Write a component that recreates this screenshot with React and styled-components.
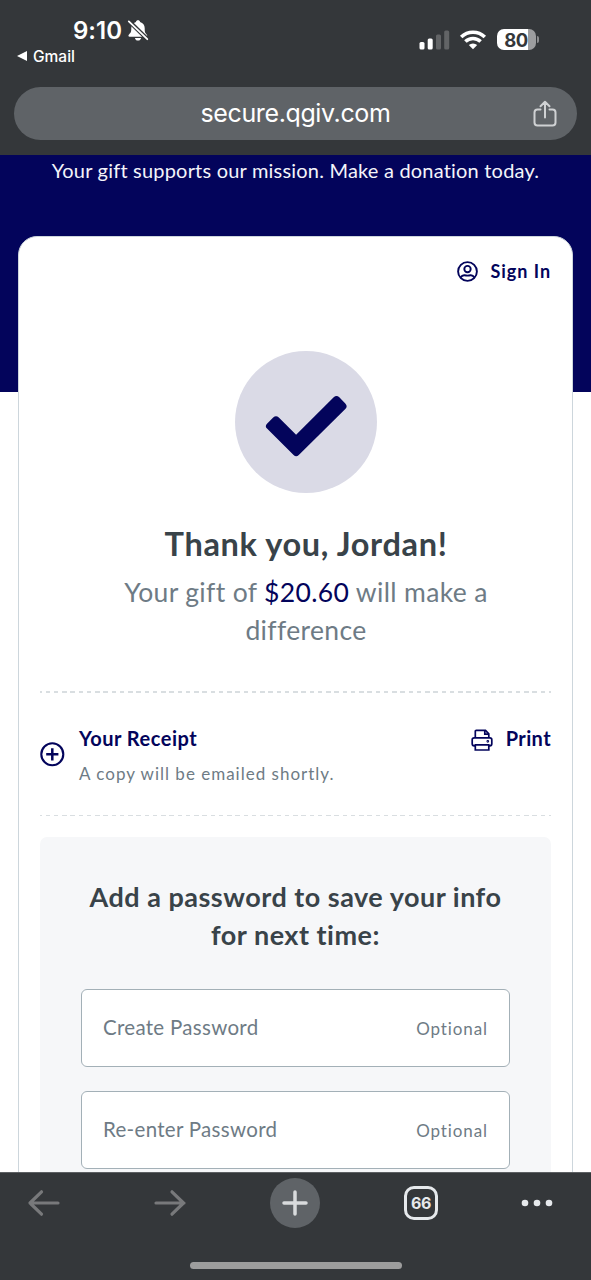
import React from "react";
import styled, { createGlobalStyle } from "styled-components";

const navy = "#03045b";
const chrome = "#34373a";
const ink = "#394349";
const slate = "#6e7b85";

const GlobalStyle = createGlobalStyle`
  *, *::before, *::after { box-sizing: border-box; }
  html, body { margin: 0; padding: 0; background: ${chrome}; }
  body { overflow: hidden; }
  h1, h2, h3, p { margin: 0; }
  button { border: 0; padding: 0; background: none; font: inherit; color: inherit; }
  svg { display: block; flex: none; overflow: visible; }
`;

const Screen = styled.div`
  width: 591px;
  height: 1280px;
  display: flex;
  flex-direction: column;
  overflow: hidden;
  font-family: Lato, "Open Sans", sans-serif;
  font-variant-ligatures: none;
`;

/* Browser top chrome */
const TopChrome = styled.header`
  flex: none;
  height: 155px;
  background: ${chrome};
  color: #fff;
  font-family: Inter, "Liberation Sans", sans-serif;
`;
const StatusBar = styled.div`
  display: flex;
  justify-content: space-between;
  height: 87px;
  padding: 16px 52px 0 17px;
`;
const Clock = styled.div`
  display: flex;
  align-items: center;
  gap: 6px;
  height: 28px;
  padding-left: 56px;
  font-size: 24px;
  font-weight: 600;
  letter-spacing: 0;
`;
const BackToApp = styled.div`
  display: flex;
  align-items: center;
  gap: 6px;
  height: 20px;
  margin-top: 2px;
  font-size: 15.5px;
  font-weight: 500;
  letter-spacing: 0;
`;
const StatusIcons = styled.div`
  display: flex;
  align-items: center;
  height: 22px;
  margin-top: 12.5px;
`;
const WifiIcon = styled.svg`
  margin-left: 10px;
`;
const Battery = styled.div`
  display: flex;
  align-items: center;
  justify-content: center;
  width: 39px;
  height: 21px;
  margin-left: 11px;
  padding-right: 1px;
  border-radius: 7px;
  background: linear-gradient(90deg, #fff 80%, #9c9d9f 80%);
  color: ${chrome};
  font-size: 18.5px;
  font-weight: 700;
  letter-spacing: -0.5px;
`;
const BatteryTip = styled.div`
  width: 2px;
  height: 7px;
  margin-left: 1px;
  border-radius: 0 3px 3px 0;
  background: #8c8d8f;
`;
const AddressBar = styled.div`
  display: grid;
  grid-template-columns: 24px 1fr 24px;
  align-items: center;
  height: 53px;
  margin: 0 14px;
  padding: 0 20px;
  border-radius: 27px;
  background: #5f6367;
`;
const Address = styled.span`
  grid-column: 2;
  padding-bottom: 2px;
  text-align: center;
  font-size: 25px;
  line-height: 50px;
  letter-spacing: -0.38px;
`;

/* Donation page */
const Page = styled.main`
  flex: 1;
  min-height: 0;
  overflow: hidden;
  background: #fff;
`;
const Hero = styled.div`
  height: 237px;
  background: ${navy};
  color: #f4f4fa;
  text-align: center;
  font-size: 20px;
  line-height: 30px;
  letter-spacing: 0.2px;
  white-space: nowrap;
`;
const Card = styled.section`
  height: 1000px;
  margin: -156px 18px 0;
  padding: 0 21px;
  border: 1px solid #cdd6dc;
  border-radius: 19px;
  background: #fff;
`;
const SignIn = styled.button`
  display: flex;
  align-items: center;
  gap: 13px;
  height: 24px;
  margin: 22px 0 0 auto;
  color: ${navy};
  font-size: 18px;
  font-weight: 700;
  letter-spacing: 0.95px;
`;
const Thanks = styled.div`
  display: flex;
  flex-direction: column;
  align-items: center;
  height: 408px;
  padding: 68px 0 0 21px;
  text-align: center;
  white-space: nowrap;
`;
const Seal = styled.div`
  display: flex;
  align-items: center;
  justify-content: center;
  width: 142px;
  height: 142px;
  padding-top: 8px;
  border-radius: 50%;
  background: #dadae6;
`;
const Title = styled.h1`
  margin-top: 31px;
  color: ${ink};
  font-size: 32.5px;
  line-height: 40px;
  font-weight: 700;
  letter-spacing: 0.65px;
`;
const Summary = styled.p`
  margin-top: 9px;
  color: ${slate};
  font-size: 26.5px;
  line-height: 38px;
  letter-spacing: 0.35px;
`;
const Amount = styled.span`
  color: ${navy};
`;
const DashedRule = styled.div`
  height: ${(p) => p.$weight}px;
  background: repeating-linear-gradient(
    90deg, #d9dee1 0 4.5px, transparent 4.5px 8.25px
  ) -2.5px 0 / 600px 100%;
`;
const Receipt = styled.div`
  display: flex;
  height: 122px;
`;
const ReceiptIcon = styled.div`
  width: 39px;
  padding-top: 49px;
`;
const ReceiptText = styled.div`
  flex: 1;
  padding-top: 31px;
  white-space: nowrap;
`;
const ReceiptTitle = styled.h2`
  color: ${navy};
  font-size: 20px;
  line-height: 28px;
  font-weight: 700;
  letter-spacing: 0.5px;
`;
const ReceiptNote = styled.p`
  margin-top: 10px;
  color: ${slate};
  font-size: 17px;
  line-height: 24px;
  letter-spacing: 1px;
`;
const PrintButton = styled.button`
  display: flex;
  align-items: center;
  align-self: flex-start;
  gap: 13px;
  height: 28px;
  margin-top: 31px;
  color: ${navy};
  font-size: 20px;
  font-weight: 700;
  letter-spacing: 0.4px;
`;
const PrinterIcon = styled.svg`
  margin-top: 3px;
`;
const PasswordPanel = styled.div`
  height: 400px;
  margin-top: 21px;
  padding: 41px 41px 0;
  border-radius: 7px;
  background: #f6f7f9;
`;
const PanelTitle = styled.h3`
  color: ${ink};
  font-size: 27px;
  line-height: 38px;
  font-weight: 700;
  letter-spacing: 0.5px;
  text-align: center;
  white-space: nowrap;
`;
const Fields = styled.div`
  display: grid;
  gap: 24px;
  margin-top: 35px;
`;
const Field = styled.label`
  display: flex;
  align-items: center;
  justify-content: space-between;
  height: 78px;
  padding: 0 21px 2px;
  border: 1px solid #a3b0b7;
  border-radius: 6px;
  background: #fff;
  color: ${slate};
  font-size: 20.5px;
  letter-spacing: 0.3px;
`;
const Hint = styled.span`
  padding-top: 3px;
  font-size: 17px;
  letter-spacing: 0.9px;
`;

/* Browser bottom chrome */
const BottomChrome = styled.footer`
  flex: none;
  display: flex;
  flex-direction: column;
  align-items: center;
  justify-content: space-between;
  height: 108px;
  padding: 5px 0 11px;
  border-top: 1px solid #5d6063;
  background: ${chrome};
  font-family: Inter, "Liberation Sans", sans-serif;
`;
const Toolbar = styled.nav`
  display: flex;
  align-items: center;
  gap: 84px;
  width: 100%;
  height: 50px;
  padding-left: 28px;
`;
const ForwardButton = styled.button`
  margin-left: 10px;
`;
const NewTab = styled.button`
  display: flex;
  align-items: center;
  justify-content: center;
  width: 50px;
  height: 50px;
  border-radius: 50%;
  background: #5f6367;
`;
const TabCount = styled.button`
  display: flex;
  align-items: center;
  justify-content: center;
  width: 34px;
  height: 34px;
  border: 3px solid #e6e9ec;
  border-radius: 10px;
  color: #e6e9ec;
  font-size: 16px;
  font-weight: 700;
  letter-spacing: -0.5px;
`;
const MoreIcon = styled.svg`
  margin-left: -1px;
`;
const HomeIndicator = styled.div`
  width: 212px;
  height: 7px;
  border-radius: 4px;
  background: #9d9d9d;
`;

const MutedBell = () => (
  <svg width="20" height="21" viewBox="0 0 20 21">
    <path d="M10 .2C8.900 .2 8.100 .9 7.900 1.900 5 2.800 3.300 5 3.300 8c0 4.200-.6 4.800-2.300 6.400-1 1-.7 2.300.7 2.300h16.200c1.400 0 1.700-1.300.7-2.300C17 12.800 16.700 12.200 16.700 8c0-3-1.700-5.200-4.600-6.100C11.900 .9 11.100 .2 10 .2ZM6.900 18h6.200c-.4 1.600-1.500 2.600-3.100 2.600S7.300 19.600 6.900 18Z" fill="#fff" />
    <path d="M.3 .6 20 19.700" stroke={chrome} strokeWidth="4.200" />
    <path d="M.8 1.400 19.300 19.200" stroke="#fff" strokeWidth="1.800" strokeLinecap="round" />
  </svg>
);

const Signal = () => (
  <svg width="31" height="20" viewBox="0 0 31 20">
    <rect x=".5" y="12" width="5" height="7.500" rx="1.500" fill="#fff" />
    <rect x="8.700" y="8.500" width="5" height="11" rx="1.500" fill="#fff" />
    <rect x="17" y="4.500" width="5" height="15" rx="1.500" fill="#626466" />
    <rect x="25.200" y=".5" width="5" height="19" rx="1.500" fill="#626466" />
  </svg>
);

const Wifi = () => (
  <WifiIcon width="26" height="20" viewBox="0 0 26 20">
    <g fill="none" stroke="#fff" strokeWidth="3.500">
      <path d="M1.200 7.100a16.800 16.800 0 0 1 23.600 0" />
      <path d="M5.400 11.600a10.700 10.700 0 0 1 15.200 0" />
    </g>
    <path d="M13 19.200 8.800 15.100a6 6 0 0 1 8.400 0Z" fill="#fff" />
  </WifiIcon>
);

const Share = () => (
  <svg width="24" height="28" viewBox="0 0 24 28" fill="none" stroke="#cfd1d3" strokeWidth="2" strokeLinecap="round" strokeLinejoin="round">
    <path d="M7.500 9.500H4.500A3 3 0 0 0 1.500 12.500V22.500a3 3 0 0 0 3 3h15a3 3 0 0 0 3-3v-10a3 3 0 0 0-3-3h-3M12 17.500V2M7.500 6.200 12 1.700l4.500 4.500" />
  </svg>
);

const User = () => (
  <svg width="21" height="21" viewBox="0 0 21 21" fill="none" stroke={navy} strokeWidth="1.900">
    <circle cx="10.500" cy="10.500" r="9.400" />
    <circle cx="10.500" cy="8.100" r="3.200" />
    <path d="M3.600 16.600c1.100-1.800 2.500-2.500 4-2.300 1.900.4 3.900.4 5.800 0 1.500-.2 2.900.5 4 2.300" />
  </svg>
);

const Check = () => (
  <svg width="82" height="62" viewBox="0 0 82 62">
    <path d="M2 28.700 8.200 22.500a4 4 0 0 1 5.600 0L31.100 39.800 68.700 2.300a4 4 0 0 1 5.600 0l6 6.100a4 4 0 0 1 0 5.600L33.800 60a3.600 3.600 0 0 1-5.200 0L2 33.600a3.500 3.500 0 0 1 0-4.900Z" fill={navy} />
  </svg>
);

const PlusCircle = () => (
  <svg width="25" height="25" viewBox="0 0 25 25" fill="none" stroke={navy} strokeWidth="2.100">
    <circle cx="12.300" cy="12.300" r="11" />
    <path d="M12.300 6.200v12.200M6.200 12.300h12.200" strokeWidth="2.500" />
  </svg>
);

const Printer = () => (
  <PrinterIcon width="22" height="22" viewBox="0 0 22 22" fill="none" stroke={navy} strokeWidth="1.700">
    <path d="M4.300 8.800V2.300a1 1 0 0 1 1-1h9.200l3.300 3.500v4M4.300 16.800H3.200a2 2 0 0 1-2-2v-4a2 2 0 0 1 2-2h15.600a2 2 0 0 1 2 2v4a2 2 0 0 1-2 2h-1.100M4.300 15.800h13.500v5.200H4.300z" />
    <path d="M13.800 1.300v3.800h4" />
    <circle cx="16.800" cy="12.300" r=".5" />
  </PrinterIcon>
);

const Arrow = ({ flip }) => (
  <svg width="32" height="26" viewBox="0 0 32 26" fill="none" stroke="#78797b" strokeWidth="3.200" strokeLinecap="round" strokeLinejoin="round">
    <path d={flip ? "M2 13h28M18 1.800 29.500 13 18 24.200" : "M30 13H2M13.500 1.800 2 13l11.500 11.200"} />
  </svg>
);

export default function App() {
  return (
    <Screen>
      <GlobalStyle />
      <TopChrome>
        <StatusBar>
          <div>
            <Clock>9:10 <MutedBell /></Clock>
            <BackToApp>
              <svg width="10" height="10" viewBox="0 0 10 10"><path d="M0 5 10 0v10Z" fill="#fff" /></svg>
              Gmail
            </BackToApp>
          </div>
          <StatusIcons>
            <Signal />
            <Wifi />
            <Battery>80</Battery>
            <BatteryTip />
          </StatusIcons>
        </StatusBar>
        <AddressBar>
          <Address>secure.qgiv.com</Address>
          <Share />
        </AddressBar>
      </TopChrome>

      <Page>
        <Hero>Your gift supports our mission. Make a donation today.</Hero>
        <Card>
          <SignIn><User />Sign In</SignIn>
          <Thanks>
            <Seal><Check /></Seal>
            <Title>Thank you, Jordan!</Title>
            <Summary>
              Your gift of <Amount>$20.60</Amount> will make a<br />difference
            </Summary>
          </Thanks>
          <DashedRule $weight={2} />
          <Receipt>
            <ReceiptIcon><PlusCircle /></ReceiptIcon>
            <ReceiptText>
              <ReceiptTitle>Your Receipt</ReceiptTitle>
              <ReceiptNote>A copy will be emailed shortly.</ReceiptNote>
            </ReceiptText>
            <PrintButton><Printer />Print</PrintButton>
          </Receipt>
          <DashedRule $weight={1} />
          <PasswordPanel>
            <PanelTitle>Add a password to save your info<br />for next time:</PanelTitle>
            <Fields>
              <Field>Create Password<Hint>Optional</Hint></Field>
              <Field>Re-enter Password<Hint>Optional</Hint></Field>
            </Fields>
          </PasswordPanel>
        </Card>
      </Page>

      <BottomChrome>
        <Toolbar>
          <Arrow />
          <ForwardButton><Arrow flip /></ForwardButton>
          <NewTab>
            <svg width="26" height="26" viewBox="0 0 26 26" stroke="#d9dbdd" strokeWidth="3.500" strokeLinecap="round"><path d="M13 2v22M2 13h22" /></svg>
          </NewTab>
          <TabCount>66</TabCount>
          <MoreIcon width="32" height="8" viewBox="0 0 32 8" fill="#e6e9ec"><circle cx="4" cy="4" r="3.300" /><circle cx="16" cy="4" r="3.300" /><circle cx="28" cy="4" r="3.300" /></MoreIcon>
        </Toolbar>
        <HomeIndicator />
      </BottomChrome>
    </Screen>
  );
}
